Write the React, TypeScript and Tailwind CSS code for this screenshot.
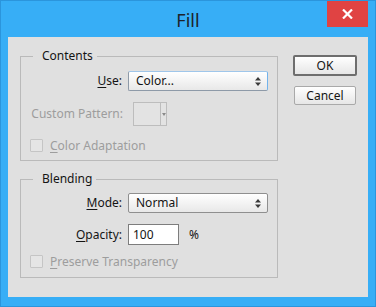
import React from "react";

function UpDown() {
  return (
    <svg width="6" height="9" viewBox="0 0 6 9" className="mr-[6px] shrink-0">
      <path d="M0 3.5 L3 0 L6 3.5 Z" fill="#3a3a3a" />
      <path d="M0 5.5 L3 9 L6 5.5 Z" fill="#3a3a3a" />
    </svg>
  );
}

function Select({ value, focused }: { value: string; focused?: boolean }) {
  return (
    <div
      className={
        "ml-[6px] w-[140px] h-[20px] flex items-center justify-between rounded-[2px] border bg-gradient-to-b from-white to-[#e8e8e8] " +
        (focused ? "border-[#8e9aa8] border-r-[#72b3ec] border-t-[#9fc6ea]" : "border-[#8f8f8f]")
      }
    >
      <span className="pl-[7px] text-[#141414]">{value}</span>
      <UpDown />
    </div>
  );
}

function Check({ hot, rest }: { hot: string; rest: string }) {
  return (
    <div className="flex items-center h-[13px]">
      <div className="ml-[9px] w-[13px] h-[13px] rounded-[1px] border border-[#c5c5c5] bg-[#e5e5e5]" />
      <span className="ml-[7px] text-[#9d9d9d]">
        <span className="underline underline-offset-2">{hot}</span>
        {rest}
      </span>
    </div>
  );
}

export default function App() {
  return (
    <div className="w-[376px] h-[307px] bg-[#37aef6] border border-[#2b95dc] flex flex-col px-[7px] pb-[9px] font-['Noto_Sans',sans-serif] text-[12px] leading-[16px]">
      <div className="relative h-[36px] flex items-center justify-center">
        <span className="text-[18px] leading-[22px] text-[#1d2329] pt-[1px]">Fill</span>
        <div className="absolute top-0 right-0 w-[41px] h-[26px] bg-[#e04343] flex items-center justify-center">
          <svg width="11" height="10" viewBox="0 0 11 10">
            <path d="M1 0.5 L10 9.5 M10 0.5 L1 9.5" stroke="#fff" strokeWidth="2.2" />
          </svg>
        </div>
      </div>

      <div className="flex-1 bg-[#e0e0e0] flex pl-[12px] pt-[11px]">
        <div className="w-[258px] flex flex-col gap-[10px]">
          <fieldset className="border border-[#bababa] pb-[8px]">
            <legend className="ml-[12px] pl-[9px] pr-[4px] text-[#141414]">Contents</legend>
            <div className="mt-[7px] h-[20px] flex items-center">
              <span className="w-[101px] text-right text-[#141414]">
                <span className="underline underline-offset-2">U</span>se:
              </span>
              <Select value="Color..." focused />
            </div>
            <div className="mt-[11px] h-[24px] flex items-center">
              <span className="w-[102px] text-right text-[#9d9d9d]">Custom Pattern:</span>
              <div className="ml-[10px] h-[24px] flex">
                <div className="w-[28px] h-[24px] border border-[#bdbdbd] bg-[#e3e3e3]" />
                <div className="w-[6px] h-[24px] border border-l-0 border-[#bdbdbd] bg-[#e3e3e3] flex items-center justify-center">
                  <svg width="4" height="3" viewBox="0 0 4 3">
                    <path d="M0 0 L4 0 L2 3 Z" fill="#8a8a8a" />
                  </svg>
                </div>
              </div>
            </div>
            <div className="mt-[13px]">
              <Check hot="C" rest="olor Adaptation" />
            </div>
          </fieldset>

          <fieldset className="border border-[#bababa] pb-[9px]">
            <legend className="ml-[12px] pl-[9px] pr-[4px] text-[#141414]">Blending</legend>
            <div className="mt-[6px] h-[20px] flex items-center">
              <span className="w-[101px] text-right text-[#141414]">
                <span className="underline underline-offset-2">M</span>ode:
              </span>
              <Select value="Normal" />
            </div>
            <div className="mt-[11px] h-[21px] flex items-center">
              <span className="w-[101px] text-right text-[#141414]">
                <span className="underline underline-offset-2">O</span>pacity:
              </span>
              <div className="ml-[6px] w-[51px] h-[21px] border border-[#7d7d7d] bg-white flex items-center">
                <span className="pl-[4px] text-[#141414]">100</span>
              </div>
              <span className="ml-[10px] text-[#141414]">%</span>
            </div>
            <div className="mt-[10px]">
              <Check hot="P" rest="reserve Transparency" />
            </div>
          </fieldset>
        </div>

        <div className="ml-[15px] pt-[7px] flex flex-col items-start">
          <button className="w-[64px] h-[21px] border-2 border-[#6e6e6e] rounded-[2px] bg-gradient-to-b from-white to-[#e6e6e6] text-[#141414] flex items-center justify-center">
            OK
          </button>
          <button className="mt-[10px] ml-[1px] w-[62px] h-[19px] border border-[#a9a9a9] rounded-[2px] bg-gradient-to-b from-white to-[#e6e6e6] text-[#141414] flex items-center justify-center">
            Cancel
          </button>
        </div>
      </div>
    </div>
  );
}
